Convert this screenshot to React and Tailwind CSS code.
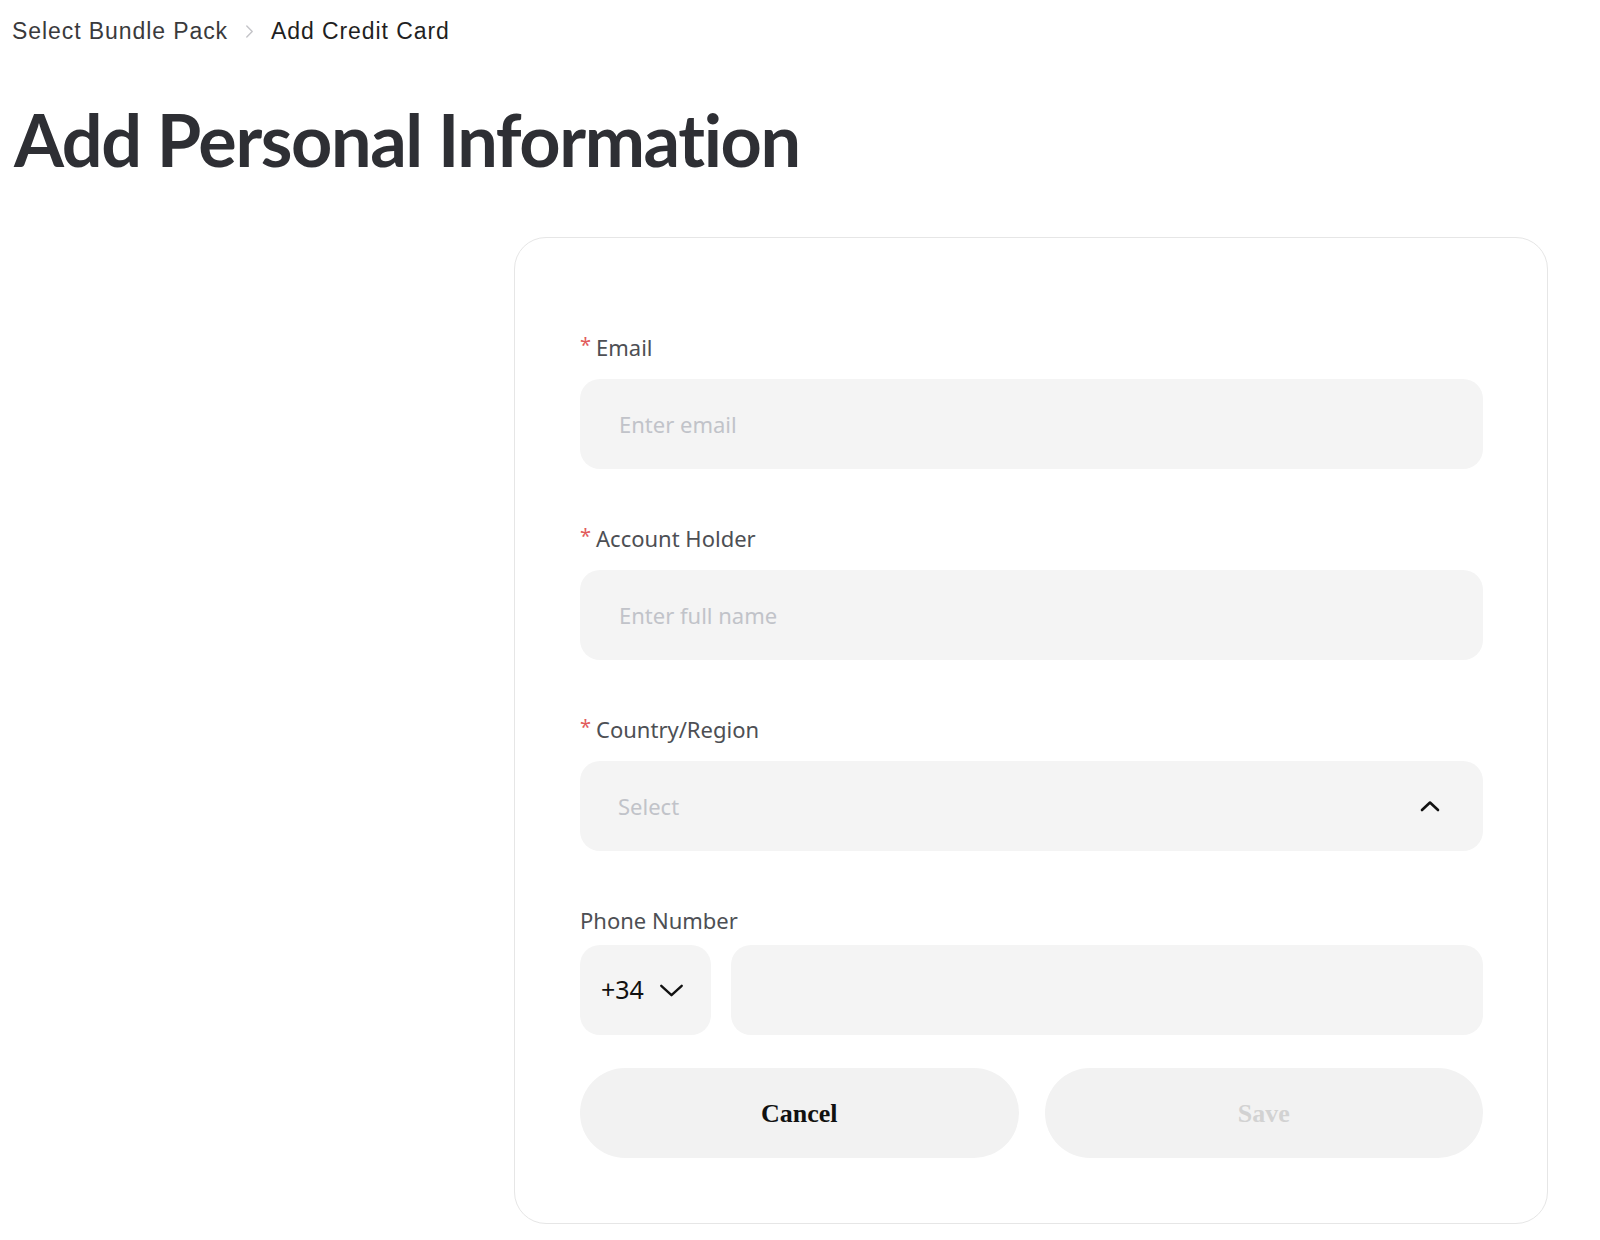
import React from 'react';

const ChevronUp = ({ className }) => (
  <svg viewBox="0 0 20 12" className={className} fill="none" stroke="currentColor" strokeWidth="2.6" strokeLinecap="round" strokeLinejoin="round">
    <path d="M2 10 L10 2.5 L18 10" />
  </svg>
);

const ChevronDown = ({ className }) => (
  <svg viewBox="0 0 26 14" className={className} fill="none" stroke="currentColor" strokeWidth="2.6" strokeLinecap="round" strokeLinejoin="round">
    <path d="M2 2 L13 12 L24 2" />
  </svg>
);

const FieldLabel = ({ required, children, className = 'mb-[17px]' }) => (
  <div className={`h-[30px] flex items-center text-[22px] leading-[30px] text-[#4d4f54] ${className}`}>
    {required && <span className="text-[#e25b5b] text-[20px] mr-[5px] -mt-[4px]">*</span>}
    <span>{children}</span>
  </div>
);

const TextInput = ({ placeholder }) => (
  <input
    type="text"
    placeholder={placeholder}
    className="w-full h-[90px] rounded-[20px] bg-[#f4f4f4] pl-[39px] pr-6 text-[22px] text-[#222] placeholder:text-[#c1c3c9] outline-none"
  />
);

export default function App() {
  return (
    <div className="min-h-[1240px] bg-white font-['Noto_Sans'] pl-[12px]">
      {/* Breadcrumb */}
      <div className="pt-[16px] h-[46px] flex items-center font-['Liberation_Sans'] text-[23px] leading-[30px] tracking-[0.04em]">
        <span className="text-[#3a3a3c]">Select Bundle Pack</span>
        <svg viewBox="0 0 10 16" className="w-[9px] h-[15px] mx-[17px] text-[#c4c4c8]" fill="none" stroke="currentColor" strokeWidth="1.6" strokeLinecap="round" strokeLinejoin="round">
          <path d="M2 2 L8 8 L2 14" />
        </svg>
        <span className="text-[#1f1f22]">Add Credit Card</span>
      </div>

      {/* Title */}
      <h1 className="mt-[57px] pl-[2px] font-['Lato'] font-bold text-[72px] leading-[72px] tracking-[-1.4px] text-[#2e2f34]">
        Add Personal Information
      </h1>

      {/* Content */}
      <div className="mt-[62px] flex">
        <div className="w-[502px] shrink-0" />
        <div className="w-[1034px] border border-[#e6e6e6] rounded-[32px] pl-[65px] pr-[64px] pt-[94px] pb-[65px]">
          <FieldLabel required>Email</FieldLabel>
          <TextInput placeholder="Enter email" />

          <div className="mt-[54px]">
            <FieldLabel required>Account Holder</FieldLabel>
            <TextInput placeholder="Enter full name" />
          </div>

          <div className="mt-[54px]">
            <FieldLabel required>Country/Region</FieldLabel>
            <div className="w-full h-[90px] rounded-[20px] bg-[#f4f4f4] pl-[38px] pr-[43px] flex items-center justify-between">
              <span className="text-[22px] text-[#c1c3c9]">Select</span>
              <ChevronUp className="w-[20px] h-[12px] text-[#111]" />
            </div>
          </div>

          <div className="mt-[54px]">
            <FieldLabel className="mb-[10px]">Phone Number</FieldLabel>
            <div className="flex gap-[20px]">
              <div className="w-[131px] h-[90px] shrink-0 rounded-[20px] bg-[#f4f4f4] flex items-center pl-[21px] gap-[15px]">
                <span className="text-[25px] text-[#111]">+34</span>
                <ChevronDown className="w-[25px] h-[13px] text-[#111]" />
              </div>
              <input
                type="tel"
                className="flex-1 h-[90px] rounded-[20px] bg-[#f4f4f4] px-6 text-[22px] outline-none"
              />
            </div>
          </div>

          <div className="mt-[33px] flex gap-[26px]">
            <button className="flex-1 h-[90px] rounded-full bg-[#f2f2f2] font-['Liberation_Serif'] font-bold text-[26px] text-[#111]">
              Cancel
            </button>
            <button className="flex-1 h-[90px] rounded-full bg-[#f2f2f2] font-['Liberation_Serif'] font-bold text-[26px] text-[#d2d2d2]">
              Save
            </button>
          </div>
        </div>
      </div>
    </div>
  );
}
